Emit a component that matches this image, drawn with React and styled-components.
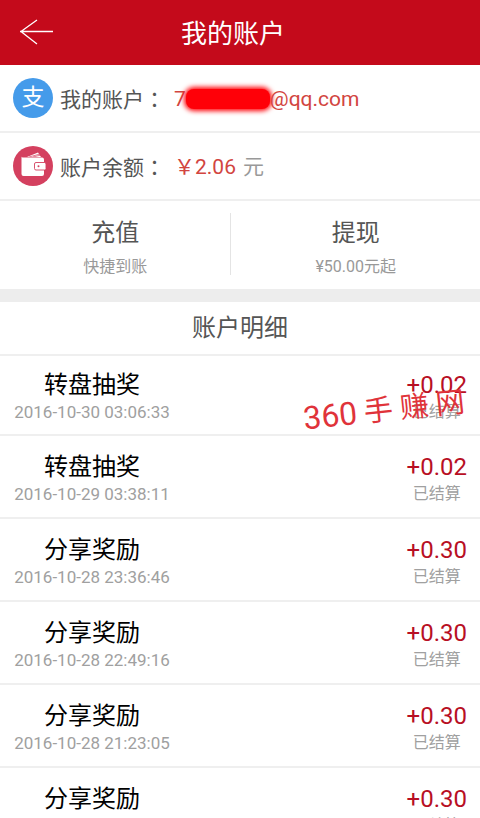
import React from "react";
import styled, { createGlobalStyle } from "styled-components";

const records = [
  { id: 1, title: "转盘抽奖", date: "2016-10-30 03:06:33", amount: "+0.02" },
  { id: 2, title: "转盘抽奖", date: "2016-10-29 03:38:11", amount: "+0.02" },
  { id: 3, title: "分享奖励", date: "2016-10-28 23:36:46", amount: "+0.30" },
  { id: 4, title: "分享奖励", date: "2016-10-28 22:49:16", amount: "+0.30" },
  { id: 5, title: "分享奖励", date: "2016-10-28 21:23:05", amount: "+0.30" },
  { id: 6, title: "分享奖励", date: "", amount: "+0.30" },
];

function App() {
  return (
    <>
      <GlobalStyle />
      <Page>
        <Header>
          <BackBtn type="button" aria-label="返回">
            <svg width="36" height="28" viewBox="0 0 36 28" fill="none">
              <path
                d="M18 1 L2 12.5 L18 25 M1 12.5 H34"
                stroke="#fff"
                strokeWidth="1.3"
              />
            </svg>
          </BackBtn>
          <h1>我的账户</h1>
        </Header>
        <Scroll>
          <InfoRow>
            <RoundIcon $color="#459bea">支</RoundIcon>
            <Label>
              我的账户<Colon>：</Colon>
            </Label>
            <Value>
              7<Mask />
              @qq.com
            </Value>
          </InfoRow>
          <InfoRow>
            <RoundIcon $color="#d4405f">
              <WalletIcon />
            </RoundIcon>
            <Label>
              账户余额<Colon>：</Colon>
            </Label>
            <Value>
              ￥2.06 <small>元</small>
            </Value>
          </InfoRow>
          <Actions>
            <ActionBtn type="button">
              <strong>充值</strong>
              <span>快捷到账</span>
            </ActionBtn>
            <ActionBtn type="button">
              <strong>提现</strong>
              <span>¥50.00元起</span>
            </ActionBtn>
          </Actions>
          <SectionTitle>账户明细</SectionTitle>
          <RecordList>
            {records.map((item) => (
              <Record key={item.id}>
                <RecordInfo>
                  <h3>{item.title}</h3>
                  <p>{item.date}</p>
                </RecordInfo>
                <RecordInfo $amount>
                  <h3>{item.amount}</h3>
                  <p>已结算</p>
                </RecordInfo>
              </Record>
            ))}
            <Watermark>
              <b>360</b>
              <span>手</span>
              <span>赚</span>
              <span>网</span>
            </Watermark>
          </RecordList>
        </Scroll>
      </Page>
    </>
  );
}

function WalletIcon() {
  return (
    <svg width="40" height="40" viewBox="0 0 40 40" fill="none">
      <path d="M14 11 L25 6.5 L28 11 Z" fill="#fff" />
      <path d="M16 11 L27 8 M20 11 L28 9" stroke="#d4405f" strokeWidth="0.7" />
      <path
        d="M10 11.5 H29 Q31 11.5 31 13.5 V28 Q31 30 29 30 H10.5 Q8.5 30 8.5 28 V10.5 Q8.5 11.5 10 11.5 Z"
        fill="#fff"
      />
      <rect
        x="21.5"
        y="16.5"
        width="11.5"
        height="7.5"
        rx="1.5"
        fill="#fff"
        stroke="#d4405f"
        strokeWidth="0.9"
      />
      <circle cx="25.5" cy="20.2" r="1" fill="#d4405f" />
    </svg>
  );
}

const GlobalStyle = createGlobalStyle`
  * {
    box-sizing: border-box;
    margin: 0;
    padding: 0;
  }
  body {
    background-color: white;
    font-family: Roboto, "Noto Sans CJK SC", sans-serif;
  }
  button {
    border: none;
    background: none;
    font-family: inherit;
    cursor: pointer;
  }
`;
const Page = styled.div`
  height: 100vh;
  display: flex;
  flex-direction: column;
`;
const Header = styled.header`
  flex: none;
  height: 65px;
  display: grid;
  grid-template-columns: 72px 1fr;
  align-items: center;
  padding-right: 86px;
  background-color: #c40a1b;
  color: white;

  h1 {
    padding-top: 2px;
    text-align: center;
    font-size: 26px;
    line-height: 32px;
    font-weight: 400;
  }
`;
const BackBtn = styled.button`
  height: 64px;
  display: flex;
  align-items: center;
  padding-left: 19px;
`;
const Scroll = styled.main`
  flex: 1;
  min-height: 0;
  overflow-y: auto;
  scrollbar-width: none;
`;
const InfoRow = styled.div`
  height: 68px;
  display: flex;
  align-items: center;
  padding: 0 13px;
  border-bottom: 2px solid #efefef;
`;
const RoundIcon = styled.span`
  width: 40px;
  height: 40px;
  flex: none;
  display: flex;
  align-items: center;
  justify-content: center;
  border-radius: 50%;
  background-color: ${(props) => props.$color};
  color: white;
  font-size: 23px;
  line-height: 40px;
`;
const Label = styled.span`
  margin-left: 7px;
  padding-top: 1px;
  color: #555;
  font-size: 21px;
  line-height: 32px;
`;
/* the TC face centres the colon in its cell */
const Colon = styled.span`
  font-family: "Noto Sans CJK TC", sans-serif;
`;
const Value = styled.span`
  display: flex;
  align-items: center;
  margin-left: 9px;
  padding-top: 1px;
  color: #d2453f;
  font-size: 21px;
  line-height: 32px;

  small {
    margin-left: 7px;
    color: #999;
    font-size: 21px;
  }
`;
const Mask = styled.i`
  width: 84px;
  height: 20px;
  border-radius: 8px;
  background-color: #ff0008;
  box-shadow: 0 0 5px 2px #ff0008;
`;
const Actions = styled.div`
  display: grid;
  grid-template-columns: 48% 52%;
  padding: 12px 0 14px;
  border-bottom: 13px solid #ededed;
`;
const ActionBtn = styled.button`
  height: 62px;
  display: flex;
  flex-direction: column;
  align-items: center;
  justify-content: flex-start;
  padding-top: 2px;

  & + & {
    border-left: 1px solid #e4e4e4;
  }
  strong {
    color: #555;
    font-size: 24px;
    line-height: 36px;
    font-weight: 400;
  }
  span {
    color: #999;
    font-size: 16px;
    line-height: 32px;
  }
`;
const SectionTitle = styled.h2`
  height: 54px;
  border-bottom: 2px solid #efefef;
  color: #555;
  font-size: 24px;
  line-height: 52px;
  font-weight: 400;
  text-align: center;
`;
const RecordList = styled.ul`
  position: relative;
  list-style: none;
`;
const Record = styled.li`
  height: 83px;
  display: flex;
  justify-content: space-between;
  padding: 15px 13px 0;
  border-bottom: 2px solid #efefef;

  &:first-child {
    height: 80px;
    padding-top: 13px;
  }
`;
const RecordInfo = styled.div`
  text-align: center;

  h3 {
    color: ${(props) => (props.$amount ? "#b80f24" : "#000")};
    font-size: 24px;
    line-height: 32px;
    font-weight: 400;
  }
  p {
    color: #a0a0a0;
    font-size: ${(props) => (props.$amount ? "16px" : "17px")};
    line-height: 22px;
  }
  &:first-child {
    min-width: 158px;
  }
`;
const Watermark = styled.div`
  position: absolute;
  top: 34px;
  right: 15px;
  display: flex;
  align-items: center;
  gap: 7px;
  color: #e0333a;
  font-size: 29px;
  line-height: 40px;
  transform: rotate(-6deg);
  pointer-events: none;

  b {
    font-size: 32px;
    font-weight: 400;
  }
`;
export default App;
